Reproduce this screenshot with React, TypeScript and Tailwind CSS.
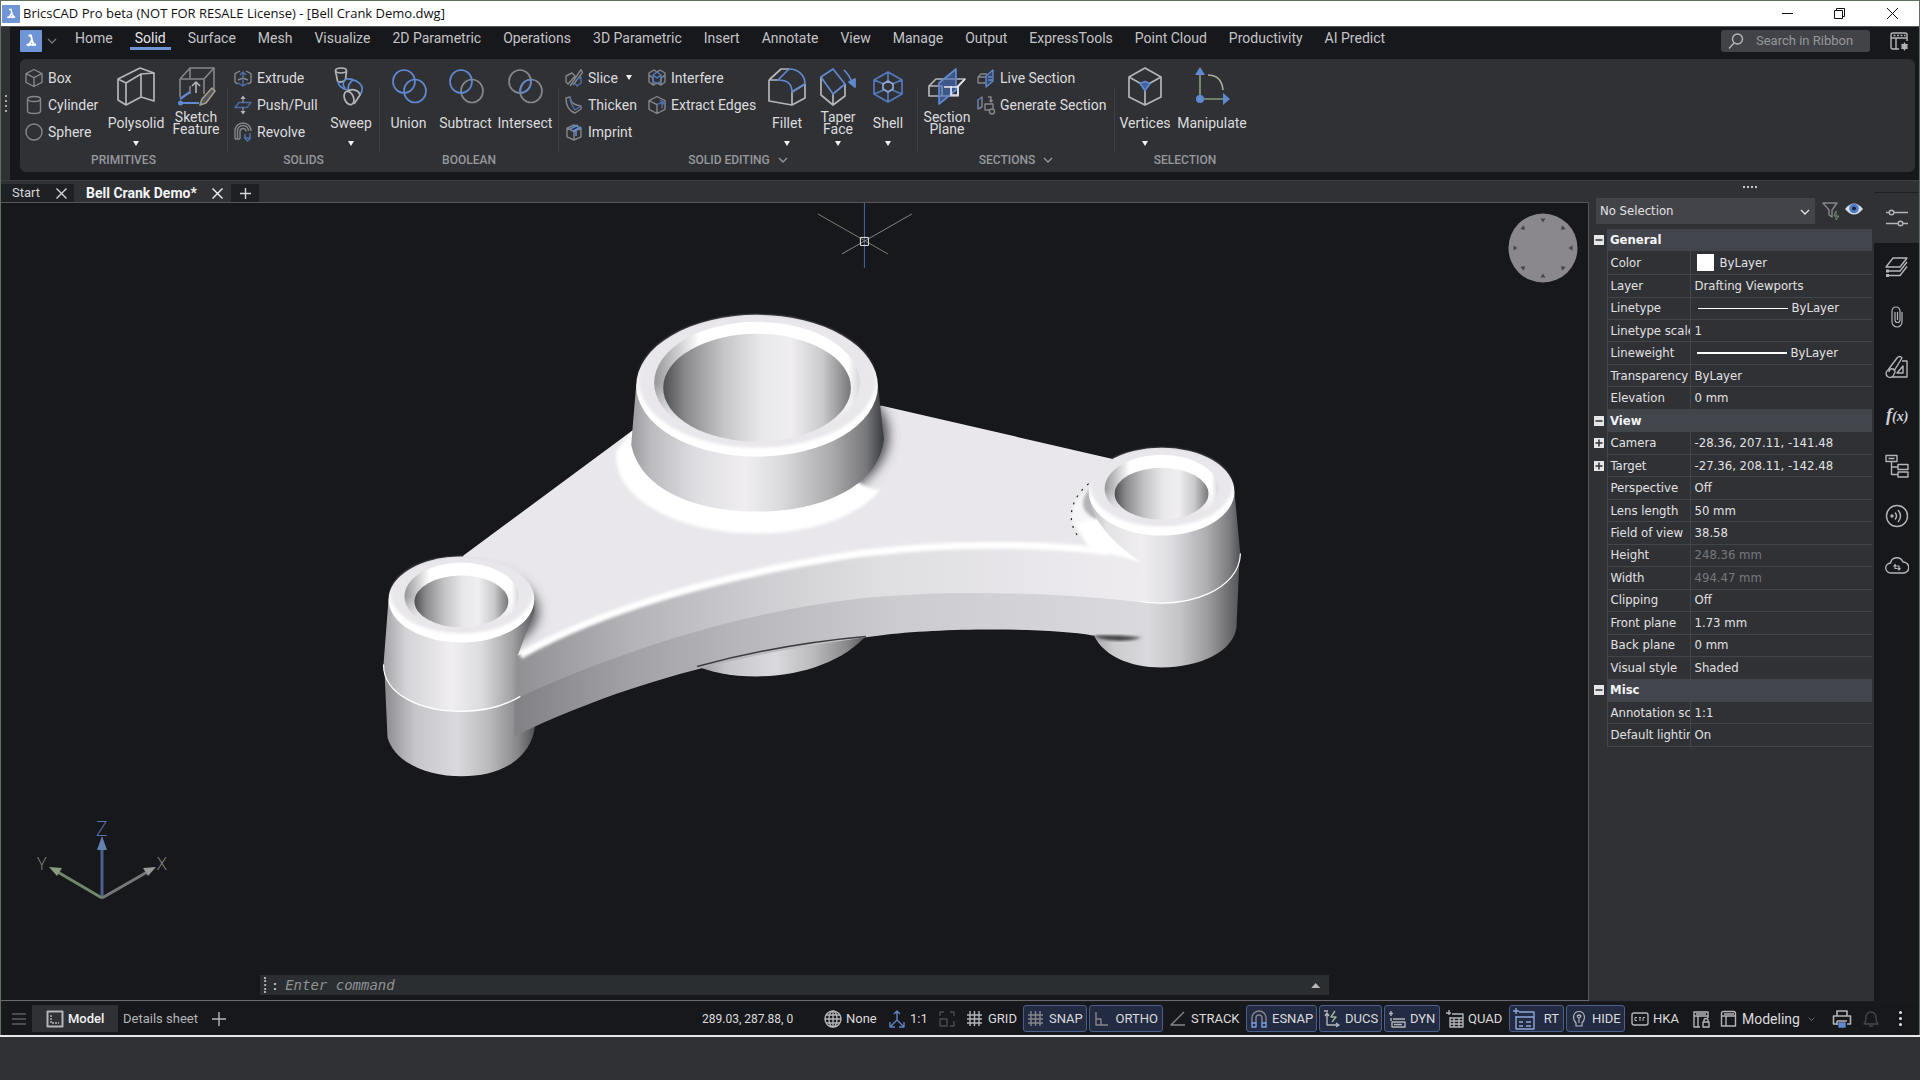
import type { ReactNode } from 'react';

const G = '#b4b5b8';
const D = '#85868b';
const B = '#5f89d0';

function Ico({ size = 20, children, stroke = G, sw = 1.4 }: { size?: number; children: ReactNode; stroke?: string; sw?: number }) {
  return (
    <svg
      width={size}
      height={size}
      viewBox={`0 0 ${size} ${size}`}
      fill="none"
      stroke={stroke}
      strokeWidth={sw}
      strokeLinejoin="round"
      className="shrink-0"
      aria-hidden="true"
    >
      {children}
    </svg>
  );
}

function Logo({ size }: { size: number }) {
  return (
    <svg width={size} height={size} viewBox="0 0 22 22" aria-hidden="true" className="shrink-0">
      <rect width="22" height="22" rx="1" fill="#6f95d6" />
      <path d="M8.5 5.5h2.500l1.300 5.500c.5 2.500 1.500 3.500 3.700 4.200M11.800 9.500c-.8 3-2.300 5-5.300 5.700M8 15.800c2-1.500 4-1.500 6-.2" fill="none" stroke="#fff" strokeWidth="1.800" />
    </svg>
  );
}

const Chevron = ({ className = '' }: { className?: string }) => (
  <svg width="10" height="8" viewBox="0 0 10 8" className={className} fill="none" stroke="currentColor" strokeWidth="1.3" aria-hidden="true">
    <path d="M1 2l4 4 4-4" />
  </svg>
);

const Arrow = () => (
  <svg width="6" height="5" viewBox="0 0 6 5" aria-hidden="true">
    <path d="M0 0h6L3 5z" fill="#f2f2f2" />
  </svg>
);

const Cross = ({ size = 13 }: { size?: number }) => (
  <svg width={size} height={size} viewBox="0 0 13 13" fill="none" stroke="currentColor" strokeWidth="1.4" aria-hidden="true">
    <path d="M1.5 1.5l10 10M11.5 1.5l-10 10" />
  </svg>
);

// ---------- ribbon icons ----------

const hex = 'M10 1.500l8 4.200v8.600l-8 4.200-8-4.200V5.700z';

const small: Record<string, ReactNode> = {
  Box: <Ico stroke={D}><path d={`${hex}M2 5.700l8 4 8-4M10 9.700v8.800`} /></Ico>,
  Cylinder: <Ico stroke={D}><ellipse cx="10" cy="4" rx="6.500" ry="2.500" /><path d="M3.500 4v12c0 1.500 3 2.500 6.500 2.500s6.500-1 6.500-2.500V4" /></Ico>,
  Sphere: <Ico stroke={D}><circle cx="10" cy="10" r="8" /></Ico>,
  Extrude: (
    <Ico stroke={D}>
      <path d="M7 3L2 5.700v8.600l3 1.500M13 3l5 2.700v8.600l-3 1.500M5 12l5-2 5 2" />
      <path d="M10 18V4M7 7l3-3 3 3M5 15l5 3 5-3" stroke="#4f70ad" />
    </Ico>
  ),
  'Push/Pull': (
    <Ico stroke={D}>
      <path d="M2 12.500l4-5h12l-4 5z" stroke="#4a6aa5" />
      <path d="M10 3v5M10 12v5" />
      <path d="M7.500 4L10 .5 12.500 4zM7.500 16l2.500 3.500 2.500-3.500z" fill={G} stroke="none" />
    </Ico>
  ),
  Revolve: (
    <Ico stroke={D}>
      <path d="M2 17V9a8 8 0 0116 0M7 17V9.500a3 3 0 016 0M2 17h5M4.500 16V9a5.500 5.500 0 0111 0" />
      <path d="M12 12v4h5v-5M11 15l3.500 4 3.500-3" stroke="#4f70ad" />
    </Ico>
  ),
  Slice: (
    <Ico stroke={D}>
      <path d="M2 8l6-3 3 3-7 8-2-2zM17 1.500L6 18M17 1.500l1.500 3L9 17" />
      <path d="M12 12l5-3v6l-4 3-2-3" stroke="#4f70ad" />
    </Ico>
  ),
  Thicken: (
    <Ico stroke={D}>
      <path d="M2 3l4-1c1 6 4 8 11 9v3l-6 4C5 16 2 11 2 3z" />
      <path d="M6 2c0 7 4 11 5 13l6-4" stroke="#4f70ad" />
    </Ico>
  ),
  Imprint: (
    <Ico stroke={D}>
      <path d="M10 3l7 3.200v8.600L10 18l-7-3.200V6.200zM3 6.200l7 3.300 7-3.300M10 9.500V18" />
      <path d="M6 7l8-4M9 9l8-4M12 8v6" stroke={B} strokeWidth="1.600" />
    </Ico>
  ),
  Interfere: (
    <Ico stroke={D}>
      <path d="M7 2L2 5v9l4 3 4-2 4 2 4-3V5l-5-3-3 2zM2 7l4 3v6M18 7l-4 3v6" />
      <path d="M10 4l4 3v6l-4 2.500L6 13V7zM6 7l4 3 4-3" stroke="#557ab9" />
    </Ico>
  ),
  'Extract Edges': (
    <Ico stroke={D}>
      <path d={`${hex}M2 5.700l8 4M10 9.700v8.800`} />
      <path d="M10 9.700l5-2.500v6M13 5l5 3M15 7.500l3 2.500" stroke="#4f70ad" />
    </Ico>
  ),
  'Live Section': (
    <Ico stroke={D}>
      <path d="M2 9l3-3h6M2 9v6h8M2 9h8" />
      <path d="M10 8l7-6v11l-7 6zM12 9h4M12 12h4" stroke={B} fill="#40609a" fillOpacity=".5" />
    </Ico>
  ),
  'Generate Section': (
    <Ico stroke={D}>
      <path d="M2 14V5l4-3v10zM9 9h8v6H9zM12 2h3v4M13.500 5L15 7l1.500-2" />
      <circle cx="16" cy="16.500" r="2.500" fill="#303135" />
      <path d="M2 14V5l4-3" stroke="#4f70ad" />
    </Ico>
  ),
};

const big: Record<string, ReactNode> = {
  Polysolid: (
    <Ico size={40} sw={1.7}>
      <path d="M2 13L24 2l14 5v28l-13-4-15 8-8-5zM2 13l8 4v22M10 17l15-9v23M25 8l13-1" />
    </Ico>
  ),
  'Sketch Feature': (
    <Ico size={40} stroke={D} sw={1.6}>
      <path d="M4 13L14 2h24v22L27 37M4 13h24v15M4 13v18M38 2L28 13M14 2v10M14 28v-8" />
      <path d="M20 27V16M16 20l4-4 4 4" stroke={G} />
      <path d="M4 33l10-7M4 37h19" stroke={B} strokeWidth="2.200" />
      <circle cx="4.500" cy="37" r="2.500" fill={B} stroke="none" />
      <path d="M36 22l3 3-9 12-6 2 2-6z" fill="#55565a" stroke="#a39e8e" />
    </Ico>
  ),
  Sweep: (
    <Ico size={40} sw={1.7}>
      <ellipse cx="10" cy="4.500" rx="5.500" ry="2.500" />
      <path d="M4.500 5l2 10c2 2 6 1 8-1.500L15.500 5" />
      <path d="M7 15c0 5 5 8 10 9M15 13c2 0 4-1 10 2 8 4 7 10 4 14M15 13c-3 3-4 6-1 9M22 14c-3 2-5 5-5 10" stroke={B} />
      <path d="M15 27c4-6 13-3 14 2l-6 9" />
      <ellipse cx="18" cy="32" rx="4.500" ry="7" transform="rotate(-22 18 32)" fill="#303135" />
    </Ico>
  ),
  Union: (
    <Ico size={40} stroke={B} sw={1.7}><ellipse cx="15" cy="15.500" rx="11" ry="11.500" /><ellipse cx="26" cy="25" rx="11" ry="11.500" /></Ico>
  ),
  Subtract: (
    <Ico size={40} sw={1.7}><ellipse cx="26" cy="25" rx="11" ry="11.500" stroke={D} /><ellipse cx="15" cy="15.500" rx="11" ry="11.500" stroke={B} /></Ico>
  ),
  Intersect: (
    <Ico size={40} stroke={D} sw={1.7}>
      <ellipse cx="15" cy="15.500" rx="11" ry="11.500" />
      <ellipse cx="26" cy="25" rx="11" ry="11.500" />
      <path d="M15.500 27c-1-6 3-13 10-13.500 1.500 6-2 13-10 13.500z" stroke={B} />
    </Ico>
  ),
  Fillet: (
    <Ico size={40} sw={1.7}>
      <path d="M2 14L14 3h8M2 14v21l23 4V26M25 26l13-8M25 39l13-7V18M2 14h9" />
      <path d="M22 3c9 0 16 6 16 15l-13 8c0-7-4-12-14-12z" stroke={B} />
    </Ico>
  ),
  'Taper Face': (
    <Ico size={40} sw={1.7}>
      <path d="M3 11v18l12 10V28M15 39l12-9V18" />
      <path d="M3 11l12-8 12 15-12 10z" stroke={B} />
      <path d="M26 4c4 4 7 9 8 13" stroke={B} />
      <path d="M31 16l6-3v8z" fill={B} stroke={B} />
    </Ico>
  ),
  Shell: (
    <Ico size={40} stroke="#5379bd" sw={1.7}>
      <path d="M20 6l14 8v14l-14 8-14-8V14zM20 6v9M20 25v11M6 14l10 4M34 14l-10 4M6 28l10-4M34 28l-10-4" />
      <path d="M20 15l5 3v5l-5 3-5-3v-5z" stroke="#8fa9d6" />
    </Ico>
  ),
  'Section Plane': (
    <Ico size={40} sw={1.7}>
      <path d="M2 20l7-7h29l-7 8v9H2zM2 20h13v10" />
      <path d="M12 17L29 3v21L12 38z" fill="#4a72bd" fillOpacity=".6" stroke={B} />
      <path d="M17 21h14M24 20v9h7v-9l7-7" stroke="#e6e9f2" />
    </Ico>
  ),
  Vertices: (
    <Ico size={40} sw={1.7}>
      <path d="M20 2l16 9v20l-16 8-16-8V11zM4 11l16 9 16-9M20 20v19" />
      <path d="M15 17.500l5-2 5 2-5 7z" fill="#41629f" stroke={B} />
    </Ico>
  ),
  Manipulate: (
    <Ico size={40} stroke="#829a78" sw={1.7}>
      <path d="M8 33V8M8 33h24" />
      <path d="M16 9c9 0 14 5 15 15" stroke="#a3ad9d" />
      <circle cx="8" cy="33" r="4" fill={B} stroke="none" />
      <path d="M3 9l5-8 5 8zM31 27l7 6-7 6z" fill={B} stroke="none" />
    </Ico>
  ),
};

function SmallBtn({ label, menu }: { label: string; menu?: boolean }) {
  return (
    <button type="button" className="flex h-[27px] items-center gap-1 whitespace-nowrap text-sm text-[#dcdcde]">
      {small[label]}
      {label}
      {menu && <span className="ml-1"><Arrow /></span>}
    </button>
  );
}

function BigBtn({ label, menu, className }: { label: string; menu?: boolean; className: string }) {
  return (
    <button type="button" className={`flex h-[86px] flex-col items-center pt-[2px] text-sm text-[#dcdcde] ${className}`}>
      {big[label]}
      <span className="mt-1 flex h-7 items-center text-center leading-3">{label}</span>
      <span className="flex h-[14px] items-center">{menu && <Arrow />}</span>
    </button>
  );
}

function Group({ title, expand, last, className, children }: { title: string; expand?: boolean; last?: boolean; className: string; children: ReactNode }) {
  return (
    <section aria-label={title} className={`flex shrink-0 ${className}`}>
      <div className="flex flex-1 flex-col">
        <div className="flex">{children}</div>
        <div className="flex h-5 items-center justify-center gap-2 text-xs font-medium text-[#97989c]">
          {title}
          {expand && <Chevron />}
        </div>
      </div>
      {!last && <div className="mt-6 h-16 w-px bg-[#3e3f44]" />}
    </section>
  );
}

const tabs = ['Home', 'Solid', 'Surface', 'Mesh', 'Visualize', '2D Parametric', 'Operations', '3D Parametric', 'Insert', 'Annotate', 'View', 'Manage', 'Output', 'ExpressTools', 'Point Cloud', 'Productivity', 'AI Predict'];

function Ribbon() {
  return (
    <header className="flex bg-[#17181c]">
      <div className="flex w-[9px] shrink-0 flex-col items-center justify-center gap-[3px] bg-[#303135]">
        {[0, 1, 2, 3].map((i) => <i key={i} className="size-[2px] bg-[#a8a8aa]" />)}
      </div>
      <div className="min-w-0 flex-1 pr-1 pb-2 pl-[10px]">
        <div className="flex h-8 items-start">
          <button type="button" aria-label="Application menu" className="mt-[3px] flex items-center gap-[5px] text-[#77787c]">
            <Logo size={22} />
            <Chevron />
          </button>
          <nav className="ml-[7px] flex">
            {tabs.map((t) => (
              <button
                key={t}
                type="button"
                className={`mx-[6px] mt-px h-[22px] border-b-[3px] px-[5px] text-sm leading-[18px] whitespace-nowrap ${
                  t === 'Solid' ? 'border-[#6f95d6] text-[#e4e4e6]' : 'border-transparent text-[#c4c4c7]'
                }`}
              >
                {t}
              </button>
            ))}
          </nav>
          <label className="mt-[3px] ml-auto flex h-[22px] w-[149px] items-center gap-3 rounded-[3px] bg-[#424348] pl-[7px]">
            <Ico size={16}><circle cx="9.500" cy="6" r="5" /><path d="M6 10l-5 5.500" /></Ico>
            <input aria-label="Search in Ribbon" placeholder="Search in Ribbon" className="w-[104px] bg-transparent text-[13px] outline-none placeholder:text-[#96979b]" />
          </label>
          <button type="button" aria-label="Ribbon settings" className="mt-1 mr-[6px] ml-[19px]">
            <Ico size={20}>
              <path d="M10 18H4a2 2 0 01-2-2V7M18 10V7M2 3.500C2 2 3 2 4 2h12c1 0 2 0 2 1.500V7H2zM7 7v11" />
              <path d="M4.500 4.500h12" strokeDasharray="2 1.500" />
              <circle cx="15.500" cy="15.500" r="2" strokeWidth="2" />
              <path d="M15.500 11.500v8M12 13.500l7 4M19 13.500l-7 4" strokeWidth="1" />
            </Ico>
          </button>
        </div>
        <div className="flex h-[113px] overflow-hidden rounded-md bg-[#303135] pt-[5px]">
          <Group title="PRIMITIVES" className="w-[208px]">
            <div className="w-[84px] pl-1">
              <SmallBtn label="Box" />
              <SmallBtn label="Cylinder" />
              <SmallBtn label="Sphere" />
            </div>
            <BigBtn label="Polysolid" menu className="w-16" />
            <BigBtn label="Sketch Feature" className="w-14" />
          </Group>
          <Group title="SOLIDS" className="w-[152px]">
            <div className="w-24 pl-[5px]">
              <SmallBtn label="Extrude" />
              <SmallBtn label="Push/Pull" />
              <SmallBtn label="Revolve" />
            </div>
            <BigBtn label="Sweep" menu className="w-[54px]" />
          </Group>
          <Group title="BOOLEAN" className="w-[179px]">
            <BigBtn label="Union" className="w-[57px]" />
            <BigBtn label="Subtract" className="w-[57px]" />
            <BigBtn label="Intersect" className="w-[62px]" />
          </Group>
          <Group title="SOLID EDITING" expand className="w-[359px]">
            <div className="w-[83px] pl-[5px]">
              <SmallBtn label="Slice" menu />
              <SmallBtn label="Thicken" />
              <SmallBtn label="Imprint" />
            </div>
            <div className="w-[119px] pl-[5px]">
              <SmallBtn label="Interfere" />
              <SmallBtn label="Extract Edges" />
            </div>
            <BigBtn label="Fillet" menu className="w-[52px]" />
            <BigBtn label="Taper Face" menu className="w-[50px]" />
            <BigBtn label="Shell" menu className="w-[50px]" />
          </Group>
          <Group title="SECTIONS" expand className="w-[197px]">
            <BigBtn label="Section Plane" className="w-[58px]" />
            <div>
              <SmallBtn label="Live Section" />
              <SmallBtn label="Generate Section" />
            </div>
          </Group>
          <Group title="SELECTION" last className="w-[140px]">
            <BigBtn label="Vertices" menu className="w-[60px]" />
            <BigBtn label="Manipulate" className="w-[74px]" />
          </Group>
        </div>
      </div>
    </header>
  );
}

// ---------- 3D model ----------

function Boss({ cx, cy, rx, ry, hole, holeRy, chamfer, chamferRy }: { cx: number; cy: number; rx: number; ry: number; hole: number; holeRy: number; chamfer: number; chamferRy: number }) {
  return (
    <g>
      <ellipse cx={cx} cy={cy} rx={rx} ry={ry} fill="url(#rim)" />
      <ellipse cx={cx} cy={cy - 4} rx={rx - 3} ry={ry - 5} fill="#e9e7eb" filter="url(#soft)" />
      <ellipse cx={cx} cy={cy - 3} rx={chamfer} ry={chamferRy} fill="url(#chamfer)" />
      <ellipse cx={cx} cy={cy - 3} rx={chamfer + 1} ry={chamferRy + 1} fill="url(#fade)" />
      <ellipse cx={cx} cy={cy + 2} rx={hole} ry={holeRy} fill="url(#bore)" />
    </g>
  );
}

function Model() {
  return (
    <svg viewBox="1 203 1587 798" className="absolute inset-0 size-full" role="img" aria-label="Bell crank model">
      <defs>
        <linearGradient id="bossSide">
          <stop offset="0" stopColor="#9b9b9f" />
          <stop offset=".08" stopColor="#bcbbbf" />
          <stop offset=".25" stopColor="#dddce0" />
          <stop offset=".45" stopColor="#f0eef1" />
          <stop offset=".6" stopColor="#d9d8db" />
          <stop offset=".8" stopColor="#a9a8ab" />
          <stop offset=".93" stopColor="#77787b" />
          <stop offset="1" stopColor="#383b3f" />
        </linearGradient>
        <linearGradient id="leftSide">
          <stop offset="0" stopColor="#a3a2a6" />
          <stop offset=".15" stopColor="#d4d3d7" />
          <stop offset=".45" stopColor="#f0eef1" />
          <stop offset=".65" stopColor="#dcdbde" />
          <stop offset=".85" stopColor="#a3a2a5" />
          <stop offset="1" stopColor="#5b5c60" />
        </linearGradient>
        <linearGradient id="leftLow">
          <stop offset="0" stopColor="#8b8b8f" />
          <stop offset=".2" stopColor="#c6c5c9" />
          <stop offset=".48" stopColor="#dad9dd" />
          <stop offset=".7" stopColor="#b9b8bb" />
          <stop offset=".88" stopColor="#89898c" />
          <stop offset="1" stopColor="#505155" />
        </linearGradient>
        <linearGradient id="rightSide">
          <stop offset="0" stopColor="#b9b8bb" />
          <stop offset=".12" stopColor="#e3e2e5" />
          <stop offset=".35" stopColor="#f0eef1" />
          <stop offset=".55" stopColor="#dddce0" />
          <stop offset=".78" stopColor="#adacaf" />
          <stop offset=".93" stopColor="#7b7b7f" />
          <stop offset="1" stopColor="#505155" />
        </linearGradient>
        <linearGradient id="rightLow">
          <stop offset="0" stopColor="#a3a2a6" />
          <stop offset=".15" stopColor="#cccbce" />
          <stop offset=".38" stopColor="#dad9dd" />
          <stop offset=".6" stopColor="#c4c3c6" />
          <stop offset=".8" stopColor="#98979a" />
          <stop offset="1" stopColor="#55565a" />
        </linearGradient>
        <linearGradient id="bore">
          <stop offset="0" stopColor="#4c4f53" />
          <stop offset=".12" stopColor="#8a8a8d" />
          <stop offset=".32" stopColor="#c4c3c6" />
          <stop offset=".52" stopColor="#e8e7ea" />
          <stop offset=".68" stopColor="#f0eef1" />
          <stop offset=".85" stopColor="#c9c8cb" />
          <stop offset="1" stopColor="#77777a" />
        </linearGradient>
        <linearGradient id="rim" x1="0" x2="0" y1="0" y2="1">
          <stop offset="0" stopColor="#e0dfe3" />
          <stop offset=".35" stopColor="#e9e7eb" />
          <stop offset=".6" stopColor="#fff" />
        </linearGradient>
        <linearGradient id="chamfer">
          <stop offset="0" stopColor="#97979a" />
          <stop offset=".12" stopColor="#cfced1" />
          <stop offset=".22" stopColor="#fff" />
          <stop offset=".94" stopColor="#fff" />
          <stop offset="1" stopColor="#d6d5d8" />
        </linearGradient>
        <linearGradient id="fade" x1="0" x2="0" y1="0" y2="1">
          <stop offset=".5" stopColor="#e9e7eb" stopOpacity="0" />
          <stop offset=".82" stopColor="#e9e7eb" />
        </linearGradient>
        <linearGradient id="faceUp" gradientUnits="userSpaceOnUse" x1="517" x2="1180" y1="0" y2="0">
          <stop offset="0" stopColor="#919195" />
          <stop offset=".18" stopColor="#b5b4b8" />
          <stop offset=".36" stopColor="#cdccd0" />
          <stop offset=".55" stopColor="#dfdee1" />
          <stop offset=".8" stopColor="#e9e7eb" />
          <stop offset="1" stopColor="#f0eef1" />
        </linearGradient>
        <linearGradient id="faceLow" gradientUnits="userSpaceOnUse" x1="517" x2="1150" y1="0" y2="0">
          <stop offset="0" stopColor="#828286" />
          <stop offset=".18" stopColor="#a2a1a5" />
          <stop offset=".36" stopColor="#b8b7bb" />
          <stop offset=".6" stopColor="#cccbcf" />
          <stop offset="1" stopColor="#dad9dd" />
        </linearGradient>
        <filter id="soft" x="-20%" y="-20%" width="140%" height="140%"><feGaussianBlur stdDeviation="1.5" /></filter>
        <filter id="shade" x="-50%" y="-50%" width="200%" height="200%"><feGaussianBlur stdDeviation="6" /></filter>
        <clipPath id="plate">
          <path d="M463 556L640 425 882 406 1112 459 1141 562C1080 545 960 543 860 556 720 575 600 612 517 657z" />
        </clipPath>
      </defs>

      {/* underside boss */}
      <path d="M690 664C710 673 730 677 757 677 800 677 845 662 868 634z" fill="url(#leftLow)" />

      {/* lower boss bodies */}
      <path d="M384 672L387 738C394 764 428 777 461 777 500 777 532 760 535 724L520 690z" fill="url(#leftLow)" />
      <path d="M1092 630C1100 656 1130 668 1162 668 1200 668 1234 652 1237 628L1240 560 1150 595z" fill="url(#rightLow)" />

      {/* plate */}
      <path d="M463 556L640 425 882 406 1112 459 1155 585C1080 560 960 558 860 571 720 590 600 627 517 672L440 640z" fill="#e9e7eb" />

      {/* contact shading on the plate */}
      <g clipPath="url(#plate)">
        <ellipse cx="763" cy="436" rx="126" ry="76" fill="#4d4e53" filter="url(#shade)" />
        <ellipse cx="472" cy="612" rx="66" ry="42" fill="#55565b" filter="url(#shade)" />
        <path d="M616 452C612 500 680 534 757 534 815 534 862 514 880 490 872 490 862 486 855 480L632 430z" fill="#fff" filter="url(#soft)" />
      </g>

      <path d="M514 658C600 610 720 574 860 554 960 542 1080 543 1150 564L1150 603 860 610 514 710z" fill="url(#faceUp)" />
      <path d="M514 700C610 656 730 614 860 599 940 590 1060 592 1150 604L1148 636 1093 636C1050 628 940 628 880 636 730 655 620 686 514 737z" fill="url(#faceLow)" />
      <path d="M697 667C760 650 820 641 866 637" fill="none" stroke="#3c3c40" strokeWidth="1.5" />
      <path d="M520 656C600 611 720 575 860 554 960 542 1040 544 1110 552" fill="none" stroke="#fff" strokeWidth="7" filter="url(#soft)" />
      <path d="M1094 636C1105 642 1125 643 1142 638L1120 636z" fill="#3d3d41" filter="url(#soft)" />

      {/* fillet of the right boss */}
      <path d="M1091 488C1076 496 1070 510 1073 524L1090 547 1141 562 1155 530z" fill="#f6f5f7" filter="url(#soft)" />
      <path d="M1076 524L1100 518 1141 562 1090 549z" fill="#fff" filter="url(#soft)" />
      <path d="M1091 488C1080 500 1080 512 1096 519L1110 520z" fill="#b4b3b7" filter="url(#soft)" />
      <path d="M1089 484C1070 500 1066 522 1080 539" fill="none" stroke="#222" strokeWidth="1.2" strokeDasharray="2 6" />

      {/* main boss */}
      <path d="M636 385L631 445C640 490 695 512 757 512 820 512 878 488 884 440L878 385z" fill="url(#bossSide)" />
      <Boss cx={757} cy={386} rx={121} ry={71} hole={94} holeRy={54} chamfer={103} chamferRy={61} />

      {/* left boss */}
      <path d="M388 600L383 665C383 695 420 712 461 712 485 712 505 706 518 698L517 657 534 612 534 600z" fill="url(#leftSide)" />
      <path d="M383 665C383 695 420 712 461 712 485 712 505 706 520 697" fill="none" stroke="#fff" strokeWidth="1.2" />
      <Boss cx={461} cy={600} rx={73} ry={43} hole={47} holeRy={26} chamfer={57} chamferRy={34} />

      {/* right boss */}
      <path d="M1089 492C1090 520 1115 545 1141 562L1148 603C1190 609 1238 590 1241 556L1235 492z" fill="url(#rightSide)" />
      <path d="M1141 602C1190 609 1240 590 1241 554" fill="none" stroke="#fff" strokeWidth="1.2" />
      <Boss cx={1162} cy={492} rx={73} ry={44} hole={47} holeRy={26} chamfer={57} chamferRy={34} />

      {/* crosshair */}
      <g fill="none">
        <path d="M864.5 203v65" stroke="#4668b0" />
        <path d="M818 214l70 40" stroke="#6f8270" />
        <path d="M912 214l-70 40" stroke="#85838a" />
        <path d="M860.5 237.5h8v8h-8z" stroke="#e8e8ea" />
      </g>
    </svg>
  );
}

function Canvas() {
  return (
    <main className="relative min-w-0 flex-1 border-t border-r border-[#55565a] bg-[#17181b]">
      <Model />
      <svg width="70" height="70" viewBox="-35 -35 70 70" className="absolute top-[10px] right-[10px]" aria-label="View compass" role="img">
        <circle r="34.5" fill="#8a888c" />
        {[0, 45, 90, 135, 180, 225, 270, 315].map((a) => (
          <path key={a} d="M-2.5-29.5h5l-2.5 4z" fill="#46464a" transform={`rotate(${a})`} />
        ))}
      </svg>
      <svg width="140" height="90" viewBox="32 815 140 90" className="absolute bottom-[95px] left-[31px] font-['Open_Sans',sans-serif] font-light" role="img" aria-label="UCS axes">
        <path d="M102 898V845" stroke="#4a618f" strokeWidth="3" />
        <path d="M97 850l5-14 5 14z" fill="#6580b3" />
        <path d="M102 898L56 871" stroke="#71876b" strokeWidth="3" />
        <path d="M49 867l13 1-5 8z" fill="#879c80" />
        <path d="M102 898l47-27" stroke="#77777a" strokeWidth="3" />
        <path d="M156 867l-13 1 5 8z" fill="#98989b" />
        <text x="96" y="836" fontSize="20" fill="#5a76ad">Z</text>
        <text x="37" y="870" fontSize="18" fill="#7d9078">Y</text>
        <text x="157" y="870" fontSize="18" fill="#8b8b8e">X</text>
      </svg>
      <label className="absolute bottom-[5px] left-1/2 flex h-5 w-[67.4%] -translate-x-1/2 items-center bg-[#2b2e31] pr-[9px] pl-1 font-['DejaVu_Sans_Mono',monospace] text-sm">
        <span className="h-4 border-l-2 border-dotted border-[#b0b0b2]" />
        <span className="ml-[5px] text-[#c8c8ca]">:</span>
        <input aria-label="Command line" placeholder="Enter command" className="ml-[6px] min-w-0 flex-1 bg-transparent italic outline-none placeholder:text-[#8f9194]" />
        <svg width="9" height="5" viewBox="0 0 9 5" aria-hidden="true"><path d="M0 5h9L4.500 0z" fill="#b8b8ba" /></svg>
      </label>
    </main>
  );
}

// ---------- properties ----------

type Row = { name: string; value?: string; kind?: 'head' | 'plus' | 'dim' | 'swatch' | 'thin' | 'thick' };

const rows: Row[] = [
  { name: 'General', kind: 'head' },
  { name: 'Color', value: 'ByLayer', kind: 'swatch' },
  { name: 'Layer', value: 'Drafting Viewports' },
  { name: 'Linetype', value: 'ByLayer', kind: 'thin' },
  { name: 'Linetype scale', value: '1' },
  { name: 'Lineweight', value: 'ByLayer', kind: 'thick' },
  { name: 'Transparency', value: 'ByLayer' },
  { name: 'Elevation', value: '0 mm' },
  { name: 'View', kind: 'head' },
  { name: 'Camera', value: '-28.36, 207.11, -141.48', kind: 'plus' },
  { name: 'Target', value: '-27.36, 208.11, -142.48', kind: 'plus' },
  { name: 'Perspective', value: 'Off' },
  { name: 'Lens length', value: '50 mm' },
  { name: 'Field of view', value: '38.58' },
  { name: 'Height', value: '248.36 mm', kind: 'dim' },
  { name: 'Width', value: '494.47 mm', kind: 'dim' },
  { name: 'Clipping', value: 'Off' },
  { name: 'Front plane', value: '1.73 mm' },
  { name: 'Back plane', value: '0 mm' },
  { name: 'Visual style', value: 'Shaded' },
  { name: 'Misc', kind: 'head' },
  { name: 'Annotation scale', value: '1:1' },
  { name: 'Default lighting', value: 'On' },
];

function Toggle({ plus, name }: { plus?: boolean; name: string }) {
  return (
    <button type="button" aria-label={`Toggle ${name}`} className="block">
      <svg width="10" height="10" viewBox="0 0 10 10" aria-hidden="true">
        <path d="M0 0h10v10H0z" fill="#e6e6e8" />
        <path d={plus ? 'M1.5 5h7M5 1.5v7' : 'M1.5 5h7'} stroke="#303135" strokeWidth="1.5" />
      </svg>
    </button>
  );
}

function Properties() {
  return (
    <aside className="w-[285px] shrink-0 bg-[#303135] pl-[5px] font-['DejaVu_Sans_Condensed','Noto_Sans',sans-serif] text-[13px] text-[#e2e2e4]">
      <div className="flex h-4 justify-center gap-[2px] pt-[5px] pl-8">
        {[0, 1, 2, 3].map((i) => <i key={i} className="size-[2px] bg-[#c8c8ca]" />)}
      </div>
      <div className="mb-1 flex h-7 items-center pl-[2px]">
        <div className="relative w-[219px]">
          <select aria-label="Selection" className="h-[26px] w-full appearance-none bg-[#434449] pl-1 text-[13px] outline-none">
            <option>No Selection</option>
          </select>
          <Chevron className="pointer-events-none absolute top-[10px] right-[5px]" />
        </div>
        <button type="button" aria-label="Filter" className="ml-[7px]">
          <Ico size={18} stroke={D}><path d="M1 1h14L10 8v7l-3-2V8z" /><path d="M14 9v5h3l-3 4v-4h-2z" stroke="#6c8a6c" strokeWidth="1" /></Ico>
        </button>
        <button type="button" aria-label="Show" className="mb-1 ml-[5px]">
          <svg width="18" height="12" viewBox="0 0 18 12" aria-hidden="true">
            <path d="M0 6q9-11 18 0-9 11-18 0z" fill="#d8dce4" />
            <circle cx="9" cy="5.500" r="4.800" fill="#4f7fcb" />
            <circle cx="9" cy="5.500" r="2" fill="#1c2536" />
          </svg>
        </button>
      </div>
      <table className="h-[518px] w-[278px] table-fixed border-collapse leading-4">
        <colgroup><col className="w-[13px]" /><col className="w-[83px]" /><col /></colgroup>
        <tbody>
          {rows.map((r) =>
            r.kind === 'head' ? (
              <tr key={r.name}>
                <td className="p-0"><Toggle name={r.name} /></td>
                <th colSpan={2} className="bg-[#43454c] p-0 pl-[3px] text-left text-[13px] leading-4 font-bold text-[#f4f4f6]">{r.name}</th>
              </tr>
            ) : (
              <tr key={r.name}>
                <td className="p-0">{r.kind === 'plus' && <Toggle plus name={r.name} />}</td>
                <th className="overflow-hidden border border-[#42454a] p-0 pl-[3px] text-left font-normal whitespace-nowrap">{r.name}</th>
                <td className={`overflow-hidden border-y border-[#42454a] p-0 pl-1 whitespace-nowrap ${r.kind === 'dim' ? 'text-[#77787c]' : ''}`}>
                  <span className="flex items-center">
                    {r.kind === 'swatch' && <i className="mr-1.5 ml-0.5 size-[17px] bg-white" />}
                    {r.kind === 'thin' && <i className="mr-1 ml-[3px] h-px w-[90px] bg-white" />}
                    {r.kind === 'thick' && <i className="mr-1 ml-0.5 h-[2px] w-[90px] bg-white" />}
                    {r.value}
                  </span>
                </td>
              </tr>
            ),
          )}
        </tbody>
      </table>
    </aside>
  );
}

const panels: { name: string; icon: ReactNode }[] = [
  { name: 'Properties', icon: <><path d="M1 6.500h3M9 6.500h14M1 17.500h12M18 17.500h5" /><circle cx="6.500" cy="6.500" r="2.300" /><circle cx="15.500" cy="17.500" r="2.300" /></> },
  { name: 'Layers', icon: <><path d="M8 3h14l-7 9H1zM22 7l-7 9H2M22 11.500l-7 9H1" /><path d="M1 16h3M1 20.500h3" strokeWidth="3" /></> },
  { name: 'Attachments', icon: <path d="M10 7v8a2.500 2.500 0 005 0V6a4 4 0 00-8 0v11a5 5 0 0010 0V7M12.500 7v8" strokeWidth="1.200" /> },
  { name: 'Details', icon: <><path d="M3 15L12 3q3-3 5 0l-8 13M3 15a4 4 0 106 4 3 3 0 10-5-2M17 6h5v16H7" /><path d="M18 11v7h-6z" /></> },
  {
    name: 'Parameters',
    icon: (
      <text x="1" y="17" fontSize="18" fontStyle="italic" fontWeight="bold" fill="#d0d0d2" stroke="none" fontFamily="Liberation Serif, serif">
        f<tspan fontSize="14">(x)</tspan>
      </text>
    ),
  },
  { name: 'Structure', icon: <path d="M1 1.500h11v6H1zM3.500 4.500h6M13 10.500h10v5H13zM13 18h10v5H13zM6.500 7.500v13H13M6.500 13H13" /> },
  { name: 'Sensors', icon: <><circle cx="12" cy="12" r="10.500" /><circle cx="7" cy="12" r="1" fill={G} /><path d="M10 8.500q3 3.500 0 7M13 6q5 6 0 12" /></> },
  { name: 'Cloud', icon: <><path d="M6 20a5 5 0 01-.5-10 6.500 6.500 0 0112.500-1 5.500 5.500 0 01.5 11z" /><path d="M8.500 13.500L10 11.500l1.500 2M10 12v3.500h2M12.500 15l1.500 2 1.500-2M14 16.500V13h-2" strokeWidth="1.200" /></> },
];

function PanelStrip() {
  return (
    <nav className="w-[45px] shrink-0 bg-[#17181c]">
      <div className="h-3 border-b border-[#1d1e21] bg-[#303135]" />
      <div className="flex h-[397px] flex-col">
        {panels.map((p, i) => (
          <button key={p.name} type="button" aria-label={p.name} className={`flex w-full flex-1 items-center justify-center ${i === 0 ? 'bg-[#303135]' : ''}`}>
            <Ico size={24}>{p.icon}</Ico>
          </button>
        ))}
      </div>
    </nav>
  );
}

// ---------- status bar ----------

const gridPath = 'M1 5h15M1 9h15M1 13h15M4 1v15M8.500 1v15M13 1v15';
const frame = 'M1.500 3.500c0-1 .5-2 2-2h10c1.500 0 2 1 2 2V6h-14zM1.500 6v10h14V6M6 6v10M4 4h10';

type Status = { label: string; className: string; on?: boolean; chevron?: boolean; hide?: boolean; icon?: ReactNode };

const status: Status[] = [
  { label: 'None', className: 'w-[62px]', icon: <Ico size={18}><circle cx="9" cy="9" r="8" /><ellipse cx="9" cy="9" rx="4" ry="8" /><path d="M9 1v16M1 9h16M2 5h14M2 13h14" /></Ico> },
  { label: '1:1', className: 'w-12', icon: <Ico size={18} stroke="#5f83c4"><path d="M9 10V1M6 4l3-3 3 3M9 10l-6 6M9 10l6 6M2 12v5h5M16 12v5h-5" /></Ico> },
  { label: 'Annotation', className: 'w-[26px]', hide: true, icon: <Ico size={18} stroke="#4a4b4f"><path d="M2 9h7v7H2zM2 6V2h4M12 2h4v4M16 11v5h-4" /></Ico> },
  { label: 'GRID', className: 'w-[59px]', icon: <Ico size={18}><path d={gridPath} /></Ico> },
  { label: 'SNAP', className: 'w-16', on: true, icon: <Ico size={18} stroke={D}><path d={gridPath} /></Ico> },
  { label: 'ORTHO', className: 'w-[74px]', on: true, icon: <Ico size={18} stroke={D}><path d="M3 2v13h12M3 9h5v6" /></Ico> },
  { label: 'STRACK', className: 'w-[79px]', icon: <Ico size={18} stroke={D}><path d="M16 15H2L15 2" /></Ico> },
  { label: 'ESNAP', className: 'w-[71px]', on: true, icon: <Ico size={18} stroke={D}><path d="M2 13V8a7 7 0 0114 0v5M6 13V8a3 3 0 016 0v5" /><path d="M2 13h4v4H2zM12 13h4v4h-4z" stroke="#7aa0e4" /></Ico> },
  { label: 'DUCS', className: 'w-[63px]', on: true, icon: <Ico size={18}><path d="M4 4v11h11M2 6l2-3 2 3M13 13l3 2-3 2M1 1h4" /><path d="M12 1L8 7h5l-4 5" stroke="#9fb39a" /></Ico> },
  { label: 'DYN', className: 'w-14', on: true, icon: <Ico size={18}><path d="M3 1v5M1 3.500h4M3 8v3M5 9h12M4 12h13v5H4zM6 14.500h8" /></Ico> },
  { label: 'QUAD', className: 'w-[65px]', icon: <Ico size={18}><path d="M3 0v5M0 3h5M6 4h11v13H4V7M4 8h13M4 11h13M4 14h13M8 8v9M13 8v9" /></Ico> },
  { label: 'RT', className: 'w-[55px]', on: true, icon: <Ico size={22} stroke="#8da6d6"><path d="M3 0v6M0 3h6M6 4h15v17H3V8M3 9h18M6 14h4M13 14h5M6 18h4M13 18h5" /></Ico> },
  { label: 'HIDE', className: 'w-[59px]', on: true, icon: <Ico size={18}><path d="M6 13C2 9 3 1.500 9 1.500S16 9 12 13v3H6zM9 13V8M7 6q2-2 4 0-1 2-2 2-1 0-2-2" strokeWidth="1.200" /></Ico> },
  { label: 'HKA', className: 'w-[59px]', icon: <Ico size={18}><rect x="1" y="3" width="16" height="12" rx="2" /><path d="M6 7.500H4v3h2M8 7.500h2M9 7.500v3.500M12 11V7.500h2" strokeWidth="1" /></Ico> },
  { label: 'Lock interface', className: 'w-[26px]', hide: true, icon: <Ico size={18}><path d="M8 17H2V2h14v6M2 6h14M6 6v11M4 4h10M11 12h6v5h-6zM12 12v-1.500a2 2 0 014 0V12" /></Ico> },
  { label: 'Modeling', className: 'w-[100px]', chevron: true, icon: <Ico size={18}><path d={frame} /></Ico> },
];

function StatusBar() {
  return (
    <footer className="flex h-[34px] items-center border-t border-[#1b1c20] bg-[#17181c] pr-[5px] text-[13px] text-[#dcdcde]">
      <button type="button" aria-label="Menu" className="flex w-[31px] justify-center pl-1">
        <Ico size={16} stroke="#5b5c60"><path d="M1 3h14M1 8h14M1 13h14" /></Ico>
      </button>
      <button type="button" className="flex h-[27px] w-[86px] items-center gap-1 bg-[#303135] pl-[14px] font-medium text-[#f2f2f4]">
        <Ico size={18}><path d="M1.500 1.500h15v15h-15z" strokeWidth="2" /><path d="M5 5v8h8" strokeDasharray="2 1" /></Ico>
        Model
      </button>
      <button type="button" className="px-[5px] whitespace-nowrap text-[#b4b5b8]">Details sheet</button>
      <button type="button" aria-label="Add layout" className="ml-2">
        <Ico size={16}><path d="M8 1v14M1 8h14" /></Ico>
      </button>
      <div className="ml-auto flex items-center gap-[2px]">
        <span className="w-[116px] text-xs whitespace-nowrap">289.03, 287.88, 0</span>
        {status.map((s) => (
          <button
            key={s.label}
            type="button"
            aria-label={s.label}
            aria-pressed={s.on}
            className={`flex h-[27px] items-center gap-1 overflow-hidden rounded-[3px] border pl-[3px] whitespace-nowrap ${s.className} ${
              s.on ? 'justify-between border-[#4a5f8c] bg-[#222b42] pr-1' : 'border-transparent'
            }`}
          >
            {s.icon}
            {!s.hide && <span className={s.chevron ? 'text-sm' : ''}>{s.label}</span>}
            {s.chevron && <Chevron className="ml-1 text-[#77787c]" />}
          </button>
        ))}
        <button type="button" aria-label="Print" className="flex w-[38px] justify-end pr-1">
          <Ico size={20}><path d="M5 7V2h10v5M5 15H1.500V7h17v8H15M5 12h10M5 12v4" strokeWidth="1.600" /><path d="M7 14h6v4H7z" fill={B} stroke={B} /></Ico>
        </button>
        <button type="button" aria-label="Notifications" className="flex w-[26px] justify-center">
          <Ico size={18} stroke="#44454a"><path d="M2 14q2-2 2-7a5 5 0 0110 0q0 5 2 7zM7 16h4" /></Ico>
        </button>
        <button type="button" aria-label="More" className="flex w-[28px] flex-col items-center gap-[3px]">
          {[0, 1, 2].map((i) => <i key={i} className="size-[3px] rounded-full bg-[#e2e2e4]" />)}
        </button>
      </div>
    </footer>
  );
}

export default function App() {
  return (
    <div className="flex min-h-screen flex-col bg-[#303135] font-['Roboto','Liberation_Sans',sans-serif] text-[#d6d6d8]">
      <div className="flex flex-1 flex-col border-x border-t border-[#5f7060]">
        <div className="flex h-[26px] items-center border-b border-[#55565a] bg-white text-[#111]">
          <span className="ml-px"><Logo size={18} /></span>
          <h1 className="ml-[3px] font-['Open_Sans',sans-serif] text-[13px]">BricsCAD Pro beta (NOT FOR RESALE License) - [Bell Crank Demo.dwg]</h1>
          <div className="ml-auto flex">
            <button type="button" aria-label="Minimize" className="flex w-[52px] items-center justify-center">
              <Ico size={13} stroke="#111"><path d="M1 6.500h11" strokeWidth="1" /></Ico>
            </button>
            <button type="button" aria-label="Restore" className="flex w-[52px] items-center justify-center">
              <Ico size={13} stroke="#111" sw={1}><path d="M1.500 3.500h8v8h-8zM3.500 3.500v-2h8v8h-2" /></Ico>
            </button>
            <button type="button" aria-label="Close" className="flex w-[54px] items-center justify-center">
              <Ico size={13} stroke="#111" sw={1}><path d="M1 1l11 11M12 1L1 12" /></Ico>
            </button>
          </div>
        </div>

        <Ribbon />

        <div className="flex flex-1 border-t border-[#3f4045]">
          <div className="flex min-w-0 flex-1 flex-col">
            <div className="flex h-[21px] items-stretch bg-[#303135] pt-[3px] text-[13px]">
              <div className="flex w-[73px] items-center justify-between bg-[#1f2024] pr-1.5 pl-[11px]">
                <button type="button">Start</button>
                <button type="button" aria-label="Close Start"><Cross /></button>
              </div>
              <div className="flex w-[157px] items-center justify-between pr-[7px] pl-3 text-sm leading-4 font-bold text-[#f4f4f6]">
                <button type="button">Bell Crank Demo*</button>
                <button type="button" aria-label="Close Bell Crank Demo"><Cross /></button>
              </div>
              <button type="button" aria-label="New drawing" className="flex w-7 items-center justify-center bg-[#1f2024]">
                <Ico size={13} stroke="#d6d6d8"><path d="M6.500 1v11M1 6.500h11" /></Ico>
              </button>
            </div>
            <Canvas />
            <div className="h-px bg-[#6a6a6e]" />
          </div>
          <Properties />
          <PanelStrip />
        </div>

        <StatusBar />
      </div>
      <div className="h-[2px] bg-[#e9e9eb]" />
      <div className="h-[43px]" />
    </div>
  );
}
